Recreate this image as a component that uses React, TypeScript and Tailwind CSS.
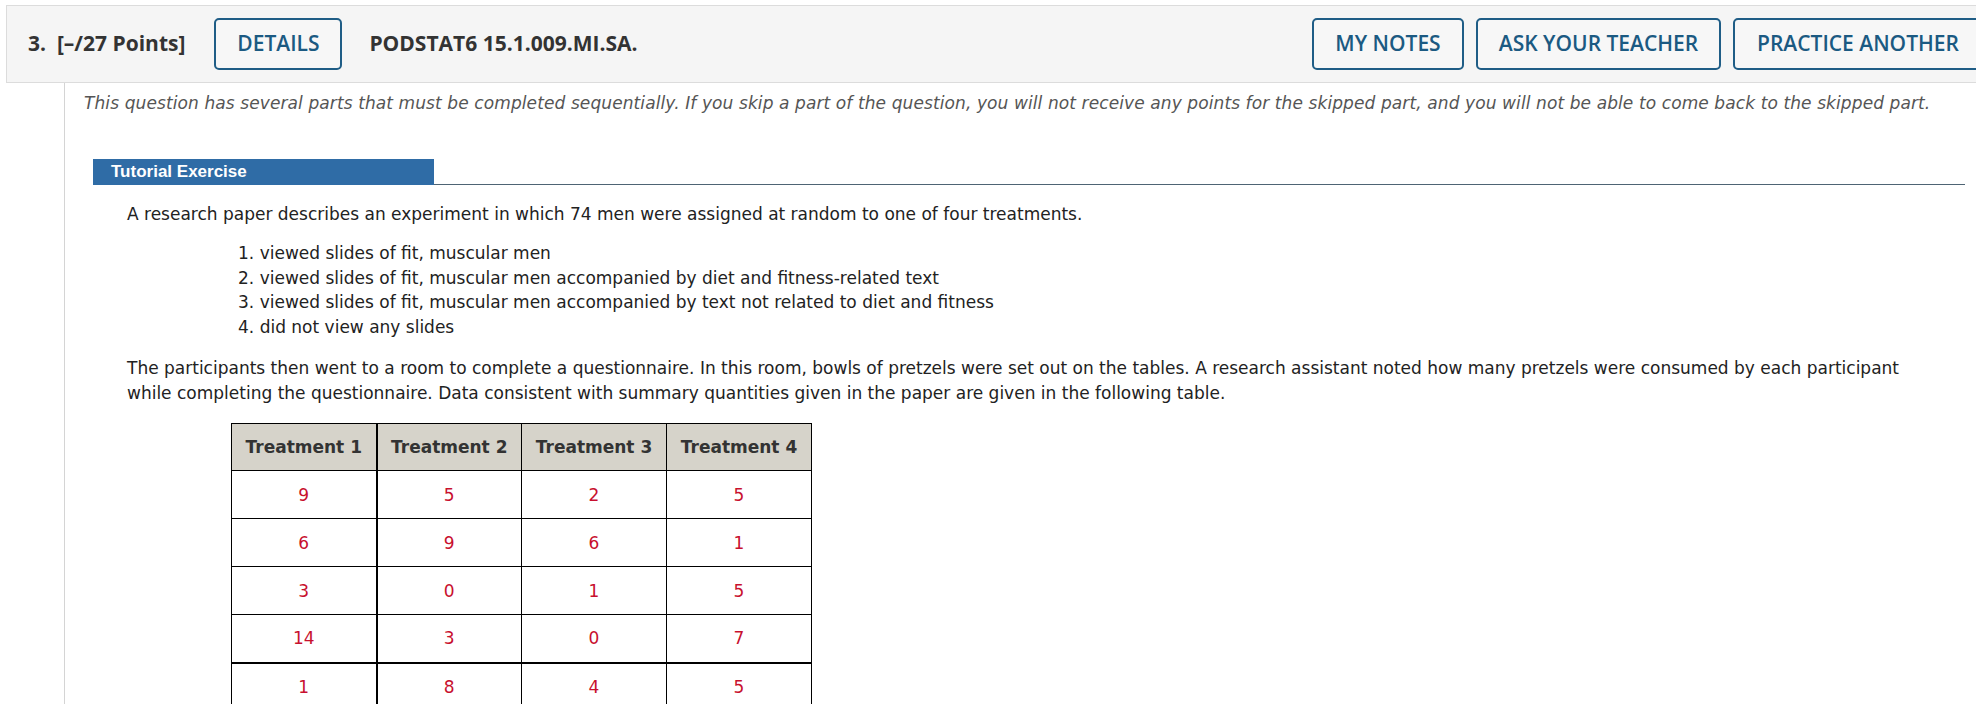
const rows = [
  ["9", "5", "2", "5"],
  ["6", "9", "6", "1"],
  ["3", "0", "1", "5"],
  ["14", "3", "0", "7"],
  ["1", "8", "4", "5"],
];

const treatments = [
  "viewed slides of fit, muscular men",
  "viewed slides of fit, muscular men accompanied by diet and fitness-related text",
  "viewed slides of fit, muscular men accompanied by text not related to diet and fitness",
  "did not view any slides",
];

const btn =
  "h-[52px] flex items-center justify-center border-2 border-[#1f5d86] rounded-[5px] text-[21px] font-semibold text-[#1b5a82] bg-[#f7f7f7]";

const App = () => {
  return (
    <div className="w-[1976px] h-[704px] overflow-hidden bg-white">
      <div className="pt-[5px] pl-[6px]">
        <div className="w-[2000px] h-[78px] flex items-center bg-[#f5f5f5] border border-[#dcdcdc] font-['Open_Sans',sans-serif]">
          <div className="pl-[21px] text-[21px] font-bold text-[#333] whitespace-pre">3.  [–/27 Points]</div>
          <div className={`${btn} w-[128px] ml-[29px]`}>DETAILS</div>
          <div className="ml-[27px] text-[21px] font-bold text-[#333]">PODSTAT6 15.1.009.MI.SA.</div>
          <div className={`${btn} w-[152px] ml-auto`}>MY NOTES</div>
          <div className={`${btn} w-[245px] ml-[12px]`}>ASK YOUR TEACHER</div>
          <div className={`${btn} w-[270px] ml-[12px] mr-[2px] justify-start pl-[22px]`}>PRACTICE ANOTHER</div>
        </div>
      </div>

      <div className="ml-[64px] border-l border-[#d4d4d4] h-[640px] font-['DejaVu_Sans',Verdana,sans-serif] text-[#222]">
        <p className="pl-[19px] pt-[10px] italic text-[17px] tracking-[0.1px] text-[#555] leading-[20px] whitespace-nowrap">
          This question has several parts that must be completed sequentially. If you skip a part of the question, you will not receive any points for the skipped part, and you will not be able to come back to the skipped part.
        </p>

        <div className="mt-[46px] ml-[28px] flex items-end">
          <div className="w-[341px] h-[26px] bg-[#2f6ca6] text-white font-['Liberation_Sans',Arial,sans-serif] font-bold text-[17px] leading-[26px] pl-[18px]">
            Tutorial Exercise
          </div>
          <div className="w-[1531px] border-b border-[#4e6474]" />
        </div>

        <div className="pl-[62px] pt-[17px] text-[17px] leading-[24px]">
          <p>A research paper describes an experiment in which 74 men were assigned at random to one of four treatments.</p>
          <ol className="mt-[15px] pl-[111px]">
            {treatments.map((t, i) => (
              <li key={i} className="leading-[24.5px]">
                {i + 1}. {t}
              </li>
            ))}
          </ol>
          <p className="mt-[17px] w-[1800px] leading-[25px]">
            The participants then went to a room to complete a questionnaire. In this room, bowls of pretzels were set out on the tables. A research assistant noted how many pretzels were consumed by each participant while completing the questionnaire. Data consistent with summary quantities given in the paper are given in the following table.
          </p>

          <table className="mt-[17px] ml-[104px] border-collapse text-center">
            <thead>
              <tr className="h-[47px] bg-[#d6d3ca]">
                {["Treatment 1", "Treatment 2", "Treatment 3", "Treatment 4"].map((h, i) => (
                  <th
                    key={h}
                    className={`w-[145px] border border-black font-bold text-[#333] text-[17px] ${i === 0 ? "border-r-2" : ""}`}
                  >
                    {h}
                  </th>
                ))}
              </tr>
            </thead>
            <tbody>
              {rows.map((r, ri) => (
                <tr key={ri} className="h-[48px]">
                  {r.map((v, ci) => (
                    <td
                      key={ci}
                      className={`border border-black text-[#c8102e] text-[17px] ${ci === 0 ? "border-r-2" : ""} ${ri === 3 ? "border-b-2" : ""}`}
                    >
                      {v}
                    </td>
                  ))}
                </tr>
              ))}
            </tbody>
          </table>
        </div>
      </div>
    </div>
  );
};

export default App;
